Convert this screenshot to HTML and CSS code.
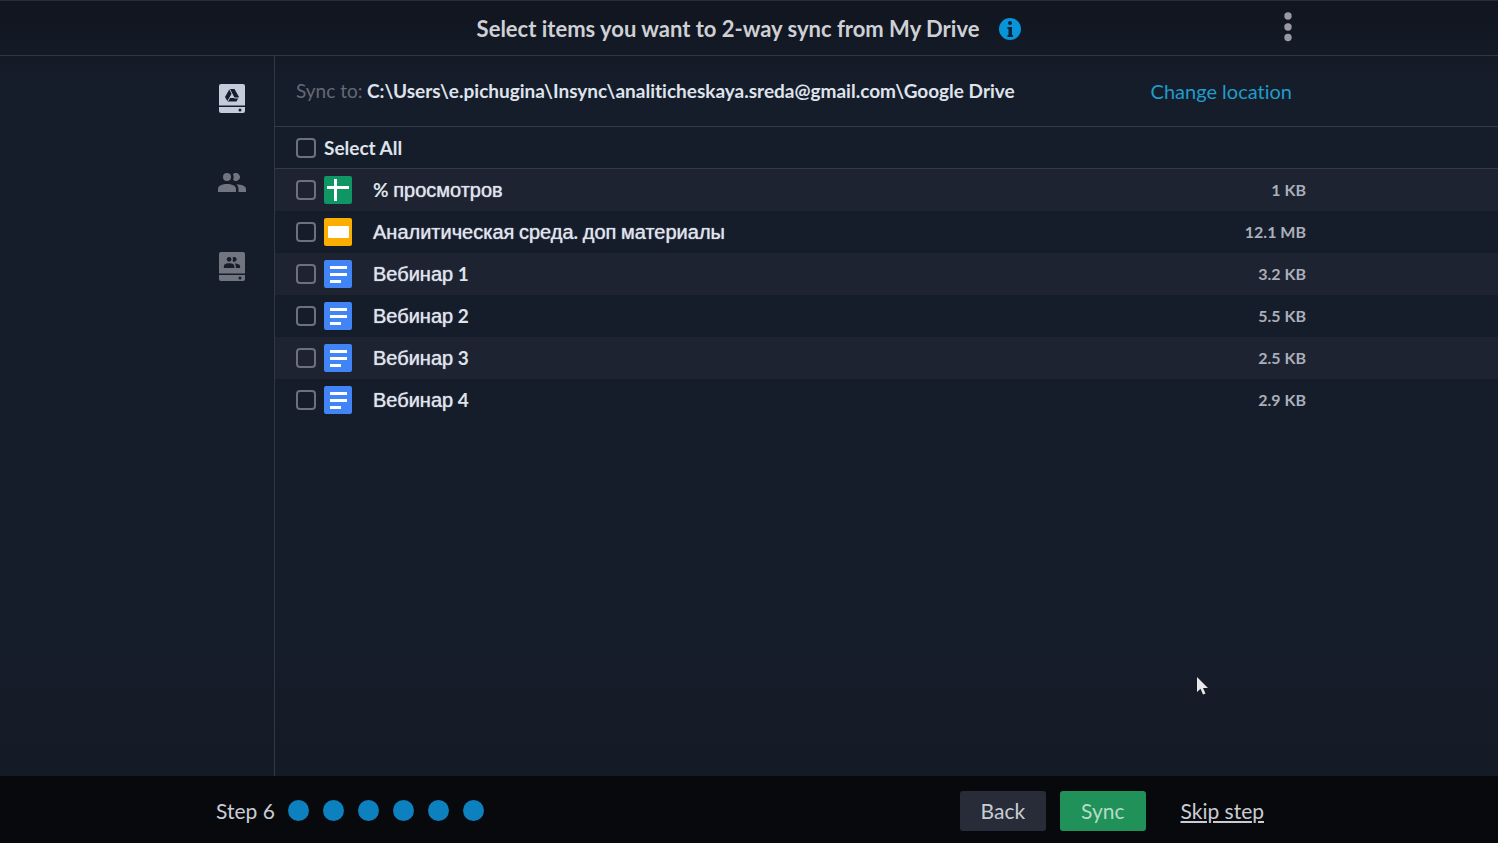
FILE: index.html
```html
<!DOCTYPE html>
<html lang="en">
<head>
  <meta charset="UTF-8">
  <meta name="viewport" content="width=device-width, initial-scale=1.0">
  <title>Insync</title>
  <link rel="stylesheet" href="styles.css">
</head>
<body>
  <!-- shared icons -->
  <svg class="sprite" aria-hidden="true">
    <symbol id="icon-people" viewBox="0 0 28 19">
      <circle cx="9" cy="4" r="4"/>
      <path d="M15 1.200a4 4 0 1 1 0 5.600a6 6 0 0 0 0-5.600z"/>
      <path d="M0 19v-3c0-3.600 4.500-5 9-5s9 1.400 9 5v3z"/>
      <path d="M18.500 11.200c5 .2 9.500 1.600 9.500 4.800v3h-7.500v-3c0-2-.8-3.600-2-4.800z"/>
    </symbol>
    <symbol id="icon-doc" viewBox="0 0 28 28">
      <rect width="28" height="28" rx="2" fill="#4184f5"/>
      <path d="M6 6h17v3H6zM6 13h17v3H6zM6 20h11v3H6z" fill="#fff"/>
    </symbol>
  </svg>

  <header class="header">
    <h1 class="title">Select items you want to 2-way sync from My Drive</h1>
    <button class="icon-btn" type="button" aria-label="Info">
      <svg width="22" height="22" viewBox="0 0 22 22">
        <circle cx="11" cy="11" r="11" fill="#0795d8"/>
        <circle cx="11" cy="5" r="2" fill="#10233c"/>
        <path d="M8.500 9H13v8h1v2H8.500v-2h1v-6h-1z" fill="#10233c"/>
      </svg>
    </button>
    <button class="icon-btn menu-btn" type="button" aria-label="Menu">
      <svg width="8" height="30" viewBox="0 0 8 30" fill="#9899a4">
        <circle cx="4" cy="4" r="3.700"/>
        <circle cx="4" cy="15" r="3.700"/>
        <circle cx="4" cy="25.500" r="3.700"/>
      </svg>
    </button>
  </header>

  <div class="content">
    <nav class="sidebar">
      <a class="side-link active" href="#my-drive" aria-label="My Drive">
        <svg width="26" height="29" viewBox="0 0 26 29">
          <path d="M2 0h22a2 2 0 0 1 2 2v19.500H0V2a2 2 0 0 1 2-2zM0 23h26v4a2 2 0 0 1-2 2H2a2 2 0 0 1-2-2z" fill="currentColor"/>
          <path d="M10.500 5h5l4.500 8-2.500 4.500H8.500L6 13z" fill="#161d2b"/>
          <path d="M13 10l2.200 4h-4.400z" fill="currentColor"/>
          <path d="M10.500 5l4.700 9H20M13 10l-4.500 7.500" fill="none" stroke="currentColor"/>
          <circle cx="21" cy="26" r="1.500" fill="#161d2b"/>
        </svg>
      </a>
      <a class="side-link" href="#shared" aria-label="Shared with me">
        <svg width="28" height="19" fill="currentColor"><use href="#icon-people"/></svg>
      </a>
      <a class="side-link" href="#shared-drives" aria-label="Shared drives">
        <svg width="26" height="29" viewBox="0 0 26 29">
          <path d="M2 0h22a2 2 0 0 1 2 2v19.500H0V2a2 2 0 0 1 2-2zM0 23h26v4a2 2 0 0 1-2 2H2a2 2 0 0 1-2-2z" fill="currentColor"/>
          <use href="#icon-people" x="4" y="5" width="18" height="11" fill="#161d2b"/>
          <circle cx="21" cy="26" r="1.500" fill="#161d2b"/>
        </svg>
      </a>
    </nav>

    <main class="main">
      <div class="location">
        <p class="path"><span class="muted">Sync to:</span> C:\Users\e.pichugina\Insync\analiticheskaya.sreda@gmail.com\Google Drive</p>
        <a class="change" href="#location">Change location</a>
      </div>

      <table class="files">
        <thead>
          <tr>
            <td class="check"><input type="checkbox" id="all"></td>
            <td class="select-all" colspan="3"><label for="all">Select All</label></td>
          </tr>
        </thead>
        <tbody>
          <tr>
            <td class="check"><input type="checkbox" id="f1"></td>
            <td class="type">
              <svg width="28" height="28" viewBox="0 0 28 28">
                <rect width="28" height="28" rx="2" fill="#109565"/>
                <path d="M10 3h3v7h12v3H13v12h-3V13H3v-3h7z" fill="#fff"/>
              </svg>
            </td>
            <td class="name"><label for="f1">% <span lang="ru">просмотров</span></label></td>
            <td class="size">1 KB</td>
          </tr>
          <tr>
            <td class="check"><input type="checkbox" id="f2"></td>
            <td class="type">
              <svg width="28" height="28" viewBox="0 0 28 28">
                <rect width="28" height="28" rx="2" fill="#fbae00"/>
                <rect x="4" y="8" width="21" height="12" rx="1" fill="#fff"/>
              </svg>
            </td>
            <td class="name"><label for="f2"><span lang="ru">Аналитическая</span> <span lang="ru">среда</span>. <span lang="ru">доп</span> <span lang="ru">материалы</span></label></td>
            <td class="size">12.1 MB</td>
          </tr>
          <tr>
            <td class="check"><input type="checkbox" id="f3"></td>
            <td class="type"><svg width="28" height="28"><use href="#icon-doc"/></svg></td>
            <td class="name"><label for="f3"><span lang="ru">Вебинар</span> 1</label></td>
            <td class="size">3.2 KB</td>
          </tr>
          <tr>
            <td class="check"><input type="checkbox" id="f4"></td>
            <td class="type"><svg width="28" height="28"><use href="#icon-doc"/></svg></td>
            <td class="name"><label for="f4"><span lang="ru">Вебинар</span> 2</label></td>
            <td class="size">5.5 KB</td>
          </tr>
          <tr>
            <td class="check"><input type="checkbox" id="f5"></td>
            <td class="type"><svg width="28" height="28"><use href="#icon-doc"/></svg></td>
            <td class="name"><label for="f5"><span lang="ru">Вебинар</span> 3</label></td>
            <td class="size">2.5 KB</td>
          </tr>
          <tr>
            <td class="check"><input type="checkbox" id="f6"></td>
            <td class="type"><svg width="28" height="28"><use href="#icon-doc"/></svg></td>
            <td class="name"><label for="f6"><span lang="ru">Вебинар</span> 4</label></td>
            <td class="size">2.9 KB</td>
          </tr>
        </tbody>
      </table>
    </main>
  </div>

  <footer class="footer">
    <span class="step">Step 6</span>
    <div class="dots">
      <span class="dot"></span>
      <span class="dot"></span>
      <span class="dot"></span>
      <span class="dot"></span>
      <span class="dot"></span>
      <span class="dot"></span>
    </div>
    <div class="actions">
      <button class="btn" type="button">Back</button>
      <button class="btn btn-sync" type="button">Sync</button>
      <a class="skip" href="#skip">Skip step</a>
    </div>
  </footer>

  <svg class="cursor" width="12" height="18" viewBox="0 0 12 18" aria-hidden="true">
    <path d="M0 0v15l3.500-3.200L6 17.500l2.500-1-2.500-5.500h5z" fill="#e8e8ea"/>
  </svg>
</body>
</html>
```
FILE: styles.css
```css
:root {
  --gutter: max(16px, calc(50vw - 557px));
  --line: #303846;
}

* {
  box-sizing: border-box;
}

body {
  margin: 0;
  min-height: 100vh;
  display: flex;
  flex-direction: column;
  font-family: Lato, "Liberation Sans", sans-serif;
  font-size: 20px;
  line-height: 24px;
  font-variant-ligatures: none;
  color: #dfe3ec;
  background: linear-gradient(#10151f, #161d2a 10%, #161d2a 75%, #131924);
}

.sprite {
  display: none;
}

.header {
  position: relative;
  display: flex;
  justify-content: center;
  align-items: center;
  gap: 20px;
  height: 56px;
  padding-top: 2px;
  border-top: 1px solid #2b2d33;
  border-bottom: 1px solid var(--line);
}

.title {
  margin: 0;
  font-size: 22px;
  font-weight: 700;
  color: #cfd0d4;
}

.icon-btn {
  display: flex;
  padding: 0;
  border: none;
  background: none;
  cursor: pointer;
}

.menu-btn {
  position: absolute;
  top: 11px;
  right: calc(var(--gutter) + 14px);
}

.content {
  flex: 1;
  display: flex;
}

.sidebar {
  width: calc(var(--gutter) + 83px);
  padding: 28px 28px 0 0;
  display: flex;
  flex-direction: column;
  align-items: flex-end;
  gap: 55px;
  border-right: 1px solid var(--line);
}

.side-link {
  display: flex;
  justify-content: center;
  align-items: center;
  width: 28px;
  height: 29px;
  color: #70757f;
}

.side-link.active {
  color: #c3ccda;
}

.main {
  flex: 1;
}

.location {
  display: flex;
  justify-content: space-between;
  align-items: center;
  height: 70px;
  padding: 0 calc(var(--gutter) + 14px) 0 21px;
}

.path {
  margin: 0;
  font-size: 19px;
  font-weight: 700;
}

.muted {
  font-weight: 400;
  color: #646a76;
}

.change {
  color: #1f9ccb;
  text-decoration: none;
}

.files {
  width: 100%;
  border-collapse: collapse;
}

.files td {
  height: 42px;
  padding: 0;
}

.files thead tr {
  border-top: 1px solid #343b48;
  border-bottom: 1px solid #343b48;
}

.files tbody tr:nth-child(odd) {
  background: #1d2330;
}

.files svg,
.files input,
.files label {
  display: block;
}

.files .check {
  width: 49px;
  padding-left: 21px;
}

.files input {
  appearance: none;
  width: 20px;
  height: 20px;
  margin: 0;
  border: 2px solid #6c717c;
  border-radius: 4px;
}

.files input:checked {
  background: #0d80bf;
}

.files .type {
  width: 49px;
}

.files label {
  font-size: 19px;
  font-weight: 700;
}

.files label span {
  font-family: "Liberation Sans", sans-serif;
  font-size: 20px;
  font-weight: 400;
  text-shadow: 0 0 1px currentColor;
}

.files .size {
  padding-right: var(--gutter);
  font-size: 16px;
  font-weight: 700;
  text-align: right;
  color: #aaafba;
}

.footer {
  display: flex;
  align-items: center;
  height: 67px;
  padding: 2px calc(var(--gutter) + 42px) 0 calc(var(--gutter) + 24px);
  font-size: 21px;
  color: #c9ccd3;
  background: #08090d;
}

.dots {
  display: flex;
  gap: 14px;
  margin-left: 13px;
}

.dot {
  width: 21px;
  height: 21px;
  border-radius: 50%;
  background: #0d80bf;
}

.actions {
  display: flex;
  align-items: center;
  gap: 14px;
  margin-left: auto;
}

.btn {
  height: 40px;
  padding: 0 21px;
  border: none;
  border-radius: 3px;
  font: inherit;
  color: #c9ccd3;
  background: #272c38;
  cursor: pointer;
}

.btn-sync {
  color: #b5dcc4;
  background: #1f9159;
}

.skip {
  margin-left: 21px;
  color: inherit;
}

/* mouse pointer */
.cursor {
  position: absolute;
  left: calc(80vw - 1px);
  top: 677px;
}
```
